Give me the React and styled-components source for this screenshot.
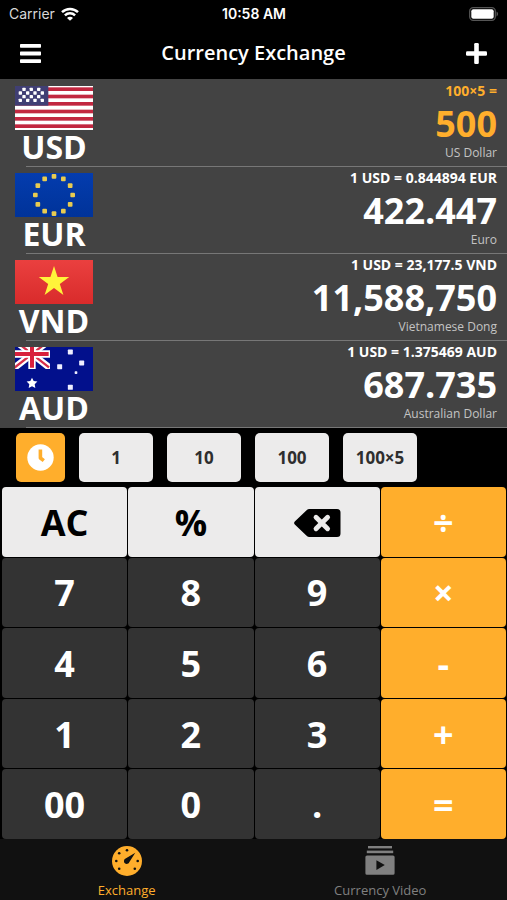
import { useState } from "react";
import styled, { createGlobalStyle } from "styled-components";

const GlobalStyle = createGlobalStyle`
  *, *::before, *::after {
    box-sizing: border-box;
  }
  body {
    margin: 0;
    background: #000;
    font-family: "Open Sans", "Noto Sans", sans-serif;
    color: #fff;
  }
  button {
    margin: 0;
    padding: 0;
    border: none;
    background: none;
    color: inherit;
    font-family: inherit;
    cursor: pointer;
  }
  svg {
    display: block;
  }
`;

const StyledApp = styled.div`
  display: flex;
  flex-direction: column;
  min-height: 100vh;
  background: #000;
`;

const StatusBar = styled.div`
  display: grid;
  grid-template-columns: 1fr auto 1fr;
  align-items: center;
  height: 27px;
  padding: 0 8px 0 9px;
  font-family: Inter, Roboto, sans-serif;
  font-size: 14px;
  line-height: 27px;
  .carrier {
    display: flex;
    align-items: center;
    gap: 6px;
    color: #d8d8d8;
  }
  .time {
    font-weight: 600;
  }
  .battery {
    justify-self: end;
  }
`;

const Header = styled.header`
  display: flex;
  align-items: center;
  justify-content: space-between;
  height: 52px;
  padding: 0 16px;
  h1 {
    margin: 0;
    font-size: 20px;
    font-weight: 600;
    line-height: 52px;
  }
`;

const IconButton = styled.button`
  display: flex;
  align-items: center;
  justify-content: center;
  width: 29px;
  height: 29px;
`;

const CurrencyList = styled.ul`
  margin: 0;
  padding: 1px 0 0;
  list-style: none;
  background: #434343;
`;

const StyledRow = styled.li`
  position: relative;
  display: flex;
  justify-content: space-between;
  height: 87px;
  padding: 0 10px 0 15px;
  &::after {
    content: "";
    position: absolute;
    left: 26px;
    right: 0;
    bottom: 0;
    height: 1px;
    background: #777;
  }
  .currency {
    width: 78px;
    padding-top: 6px;
    text-align: center;
  }
  .code {
    font-size: 32px;
    font-weight: 700;
    line-height: 34px;
  }
  .amount {
    display: flex;
    flex-direction: column;
    padding-top: 1px;
    text-align: right;
    color: ${({ $active }) => ($active ? "#ffae2c" : "#fff")};
  }
  .rate {
    font-size: 14px;
    font-weight: 700;
    line-height: 20px;
  }
  .value {
    font-size: 36px;
    font-weight: 700;
    line-height: 46px;
  }
  .name {
    font-size: 12px;
    line-height: 12px;
    color: #c4c4c4;
  }
`;

const QuickBar = styled.div`
  display: flex;
  align-items: center;
  gap: 14px;
  height: 59px;
  padding: 0 16px;
`;

const QuickButton = styled.button`
  display: flex;
  align-items: center;
  justify-content: center;
  width: ${({ $history }) => ($history ? "49px" : "74px")};
  height: 49px;
  border-radius: 5px;
  background: ${({ $history }) => ($history ? "#ffae2c" : "#ecebeb")};
  color: ${({ $history }) => ($history ? "#fff" : "#2e2e2e")};
  font-size: 17px;
  font-weight: 700;
`;

const Keypad = styled.div`
  flex: 1;
  display: grid;
  grid-template-columns: repeat(4, 1fr);
  grid-auto-rows: 1fr;
  gap: 1px;
  padding: 0 1px 0 2px;
`;

const keyColors = {
  light: { bg: "#ecebeb", fg: "#000" },
  dark: { bg: "#333", fg: "#fff" },
  orange: { bg: "#ffae2c", fg: "#fff" }
};

const Key = styled.button`
  display: flex;
  align-items: center;
  justify-content: center;
  min-height: 60px;
  padding-top: 2px;
  border-radius: 4px;
  background: ${({ $tone }) => keyColors[$tone].bg};
  color: ${({ $tone }) => keyColors[$tone].fg};
  font-size: 36px;
  font-weight: 700;
  line-height: 52px;
`;

const TabBar = styled.nav`
  display: grid;
  grid-template-columns: 1fr 1fr;
  height: 61px;
  background: #111;
`;

const Tab = styled.button`
  display: flex;
  flex-direction: column;
  align-items: center;
  gap: 2px;
  padding-top: 7px;
  color: ${({ $active }) => ($active ? "#ffae2c" : "#808080")};
  font-size: 13px;
  line-height: 24px;
`;

const starPoints = (cx, cy, r, inner = 0.382) =>
  Array.from({ length: 10 }, (_, i) => {
    const radius = i % 2 ? r * inner : r;
    const angle = (Math.PI / 5) * i - Math.PI / 2;
    return `${cx + radius * Math.cos(angle)},${cy + radius * Math.sin(angle)}`;
  }).join(" ");

const UsFlag = () => (
  <svg width="78" height="44" viewBox="0 0 234 132" role="img" aria-label="United States">
    <rect width="234" height="132" fill="#fff" />
    {[4, 26, 48, 71, 93, 115].map((y) => (
      <rect key={y} y={y} width="234" height="11" fill="#c22740" />
    ))}
    <rect width="100" height="59" fill="#403f74" />
    {[10, 21, 32, 43].map((y, row) =>
      (row % 2 ? [16, 38, 60, 82] : [27, 49, 71]).map((x) => (
        <rect key={`${x}-${y}`} x={x - 5} y={y - 5} width="10" height="10" rx="2" fill="#fff" />
      ))
    )}
  </svg>
);

const EuFlag = () => (
  <svg width="78" height="44" viewBox="0 0 234 132" role="img" aria-label="European Union">
    <defs>
      <linearGradient id="eu" x1="0" y1="0" x2="0" y2="1">
        <stop offset="0" stopColor="#043cae" />
        <stop offset="1" stopColor="#003399" />
      </linearGradient>
    </defs>
    <rect width="234" height="132" fill="url(#eu)" />
    {Array.from({ length: 12 }, (_, i) => {
      const angle = (Math.PI / 6) * i;
      const x = 117 + 56 * Math.cos(angle);
      const y = 66 + 56 * Math.sin(angle);
      return (
        <rect key={i} x={x - 7} y={y - 7} width="14" height="14" rx="3" fill="#e8cb50" />
      );
    })}
  </svg>
);

const VnFlag = () => (
  <svg width="78" height="44" viewBox="0 0 234 132" role="img" aria-label="Vietnam">
    <defs>
      <linearGradient id="vn" x1="0" y1="0" x2="0" y2="1">
        <stop offset="0" stopColor="#ea403f" />
        <stop offset="1" stopColor="#d92b2b" />
      </linearGradient>
    </defs>
    <rect width="234" height="132" fill="url(#vn)" />
    <polygon points={starPoints(117, 66, 48)} fill="#fff43a" />
  </svg>
);

const AuFlag = () => (
  <svg width="78" height="44" viewBox="0 0 234 132" role="img" aria-label="Australia">
    <defs>
      <clipPath id="jack">
        <rect width="105" height="66" />
      </clipPath>
    </defs>
    <rect width="234" height="132" fill="#02108c" />
    <g clipPath="url(#jack)" fill="none">
      <path d="M-4 -22L106 64M106 -22L-4 64" stroke="#fff" strokeWidth="20" />
      <path d="M-4 -22L102 61M106 -22L-4 64" stroke="#d8304a" strokeWidth="7" />
      <path d="M51 -10V66M0 21H105" stroke="#fff" strokeWidth="22" />
      <path d="M51 -10V62M0 21H101" stroke="#d8203c" strokeWidth="12" />
    </g>
    <polygon points={starPoints(51, 109, 17, 0.5)} fill="#fff" />
    {[
      [166, 15, 15],
      [134, 59, 15],
      [200, 48, 15],
      [166, 121, 15],
      [183, 77, 8]
    ].map(([x, y, s]) => (
      <rect key={`${x}-${y}`} x={x - s / 2} y={y - s / 2} width={s} height={s} rx="2" fill="#eef" />
    ))}
  </svg>
);

const WifiIcon = () => (
  <svg width="18" height="14" viewBox="0 0 18 14" fill="none" stroke="#fff" strokeWidth="2.5">
    <path d="M1 5.2A11.6 11.6 0 0 1 17 5.2" />
    <path d="M3.9 8.4A7.4 7.4 0 0 1 14.1 8.4" />
    <path d="M9 13.8L6 10.9A4.2 4.2 0 0 1 12 10.9Z" fill="#fff" stroke="none" />
  </svg>
);

const BatteryIcon = () => (
  <svg width="30" height="14" viewBox="0 0 30 14">
    <rect x="0.7" y="0.7" width="25.6" height="12.6" rx="3.5" fill="none" stroke="#555" strokeWidth="1.3" />
    <rect x="2.3" y="2.3" width="22.4" height="9.4" rx="2" fill="#fff" />
    <path d="M27.5 4.6C29.6 5.4 29.6 8.6 27.5 9.4Z" fill="#555" />
  </svg>
);

const MenuIcon = () => (
  <svg width="21" height="19" viewBox="0 0 21 19" fill="#fff">
    <rect y="0" width="21" height="3.8" rx="0.7" />
    <rect y="7.6" width="21" height="3.8" rx="0.7" />
    <rect y="15.2" width="21" height="3.8" rx="0.7" />
  </svg>
);

const PlusIcon = () => (
  <svg width="21" height="21" viewBox="0 0 21 21" fill="#fff">
    <rect x="8.2" width="4.6" height="21" rx="1.3" />
    <rect y="8.2" width="21" height="4.6" rx="1.3" />
  </svg>
);

const ClockIcon = () => (
  <svg width="27" height="27" viewBox="0 0 27 27" fill="none">
    <circle cx="13.5" cy="13.5" r="13.2" fill="#fff" />
    <path d="M13.4 5.6V14L16.8 16.6" stroke="#ffae2c" strokeWidth="3.6" strokeLinejoin="round" />
  </svg>
);

const BackspaceIcon = () => (
  <svg width="47" height="28" viewBox="0 0 47 28">
    <path
      d="M12.6 1.2Q13.8 0 15.5 0H43Q46.5 0 46.5 3.5V24.5Q46.5 28 43 28H15.5Q13.8 28 12.6 26.8L0.8 15.4Q-0.6 14 0.8 12.6Z"
      fill="#000"
    />
    <path
      d="M22 8.2L33.6 19.8M33.6 8.2L22 19.8"
      stroke="#ecebeb"
      strokeWidth="4.8"
      strokeLinecap="round"
    />
  </svg>
);

const SpeedIcon = () => (
  <svg width="30" height="30" viewBox="0 0 30 30">
    <circle cx="15" cy="15" r="15" fill="#ffae2c" />
    <g fill="#111">
      <circle cx="4.3" cy="15" r="1.3" />
      <circle cx="7.2" cy="7.2" r="1.3" />
      <circle cx="15" cy="4.3" r="1.3" />
      <circle cx="25.7" cy="15" r="1.3" />
      <circle cx="7.2" cy="22.8" r="1.3" />
      <circle cx="22.8" cy="22.8" r="1.3" />
      <path d="M23.3 6.7L17.4 16A2.8 2.8 0 1 1 13.6 12.6Z" />
    </g>
  </svg>
);

const VideoIcon = () => (
  <svg width="30" height="30" viewBox="0 0 30 30" fill="#808080">
    <rect x="3" y="0" width="24" height="2.4" />
    <rect x="1.8" y="4.6" width="26.4" height="2.6" />
    <path
      fillRule="evenodd"
      d="M2 9.4H28Q29.6 9.4 29.6 11V27.2Q29.6 28.8 28 28.8H2Q0.4 28.8 0.4 27.2V11Q0.4 9.4 2 9.4ZM11.4 14.2V24L19.8 19.1Z"
    />
  </svg>
);

const currencies = [
  { code: "USD", Flag: UsFlag, rate: "100×5 =", value: "500", name: "US Dollar", active: true },
  { code: "EUR", Flag: EuFlag, rate: "1 USD = 0.844894 EUR", value: "422.447", name: "Euro" },
  { code: "VND", Flag: VnFlag, rate: "1 USD = 23,177.5 VND", value: "11,588,750", name: "Vietnamese Dong" },
  { code: "AUD", Flag: AuFlag, rate: "1 USD = 1.375469 AUD", value: "687.735", name: "Australian Dollar" }
];

const quickValues = ["1", "10", "100", "100×5"];

const keys = [
  ["AC", "%", "del", "÷"],
  ["7", "8", "9", "×"],
  ["4", "5", "6", "-"],
  ["1", "2", "3", "+"],
  ["00", "0", ".", "="]
];

const getTone = (row, col) => {
  if (col === 3) return "orange";
  return row === 0 ? "light" : "dark";
};

export default function App() {
  const [tab, setTab] = useState("exchange");
  return (
    <StyledApp>
      <GlobalStyle />
      <StatusBar>
        <div className="carrier">
          Carrier <WifiIcon />
        </div>
        <div className="time">10:58 AM</div>
        <div className="battery">
          <BatteryIcon />
        </div>
      </StatusBar>
      <Header>
        <IconButton aria-label="Menu">
          <MenuIcon />
        </IconButton>
        <h1>Currency Exchange</h1>
        <IconButton aria-label="Add currency">
          <PlusIcon />
        </IconButton>
      </Header>
      <CurrencyList>
        {currencies.map(({ code, Flag, rate, value, name, active }) => (
          <StyledRow key={code} $active={active}>
            <div className="currency">
              <Flag />
              <div className="code">{code}</div>
            </div>
            <div className="amount">
              <span className="rate">{rate}</span>
              <span className="value">{value}</span>
              <span className="name">{name}</span>
            </div>
          </StyledRow>
        ))}
      </CurrencyList>
      <QuickBar>
        <QuickButton $history aria-label="History">
          <ClockIcon />
        </QuickButton>
        {quickValues.map((value) => (
          <QuickButton key={value}>{value}</QuickButton>
        ))}
      </QuickBar>
      <Keypad>
        {keys.map((row, r) =>
          row.map((key, c) => (
            <Key key={key} $tone={getTone(r, c)} aria-label={key === "del" ? "Delete" : undefined}>
              {key === "del" ? <BackspaceIcon /> : key}
            </Key>
          ))
        )}
      </Keypad>
      <TabBar>
        <Tab $active={tab === "exchange"} onClick={() => setTab("exchange")}>
          <SpeedIcon />
          Exchange
        </Tab>
        <Tab $active={tab === "video"} onClick={() => setTab("video")}>
          <VideoIcon />
          Currency Video
        </Tab>
      </TabBar>
    </StyledApp>
  );
}
